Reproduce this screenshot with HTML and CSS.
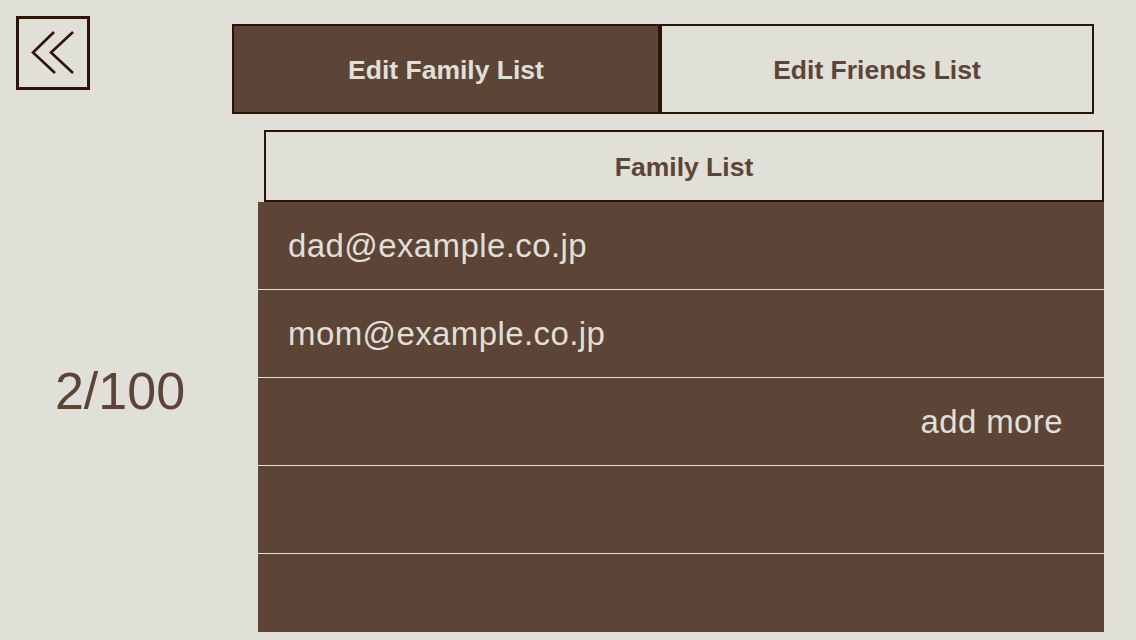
FILE: index.html
```html
<!DOCTYPE html>
<html lang="en">
<head>
<meta charset="utf-8">
<title>Edit Family List</title>
<link rel="stylesheet" href="styles.css">
</head>
<body>
<div class="page">
  <div class="top">
    <div class="back">
      <svg width="68" height="68" viewBox="0 0 68 68">
        <polyline points="35,13 14,33.5 36,54" fill="none" stroke="#2e1406" stroke-width="2.6"/>
        <polyline points="54,13 32,33.5 54,54" fill="none" stroke="#2e1406" stroke-width="2.6"/>
      </svg>
    </div>
    <div class="tabs">
      <div class="tab tab-active">Edit Family List</div>
      <div class="tab tab-idle">Edit Friends List</div>
    </div>
  </div>
  <div class="main">
    <div class="counter-col"><span class="counter">2/100</span></div>
    <div class="list-col">
      <div class="list-header">Family List</div>
      <div class="list">
        <div class="row">dad@example.co.jp</div>
        <div class="row">mom@example.co.jp</div>
        <div class="row row-add">add more</div>
        <div class="row"></div>
        <div class="row"></div>
      </div>
    </div>
  </div>
</div>
</body>
</html>
```

FILE: styles.css
```css
html, body {
  margin: 0;
  padding: 0;
  background: #e0dfd8;
}
body {
  font-family: "Liberation Sans", Arial, sans-serif;
  width: 1136px;
  height: 640px;
  overflow: hidden;
}
.page {
  display: flex;
  flex-direction: column;
}
.top {
  display: flex;
  padding: 16px 0 0 16px;
}
.back {
  width: 74px;
  height: 74px;
  box-sizing: border-box;
  border: 3px solid #2e1406;
  display: flex;
}
.tabs {
  display: flex;
  margin: 8px 0 0 142px;
  height: 90px;
}
.tab {
  box-sizing: border-box;
  border: 2px solid #2e1406;
  display: flex;
  align-items: center;
  justify-content: center;
  padding-top: 2px;
  font-weight: bold;
  font-size: 26.5px;
}
.tab-active {
  width: 428px;
  background: #5c4437;
  color: #e0dfd8;
}
.tab-idle {
  width: 434px;
  color: #5c4437;
}
.main {
  display: flex;
  margin-top: 16px;
}
.counter-col {
  width: 240px;
  display: flex;
  align-items: center;
  justify-content: center;
  padding-top: 20px;
  box-sizing: border-box;
}
.counter {
  font-size: 52px;
  color: #5c4437;
}
.list-col {
  margin-left: 18px;
  width: 846px;
  display: flex;
  flex-direction: column;
}
.list-header {
  margin-left: 6px;
  height: 72px;
  box-sizing: border-box;
  border: 2px solid #2e1406;
  display: flex;
  align-items: center;
  justify-content: center;
  padding-top: 2px;
  font-weight: bold;
  font-size: 26.5px;
  color: #5c4437;
}
.list {
  height: 430px;
  overflow: hidden;
  background: #5c4437;
}
.row {
  height: 88px;
  box-sizing: border-box;
  border-bottom: 1px solid #e0dfd8;
  display: flex;
  align-items: center;
  padding: 0 41px 0 30px;
  font-size: 33px;
  letter-spacing: 0.4px;
  color: #e0dfd8;
}
.row-add {
  justify-content: flex-end;
}
```
